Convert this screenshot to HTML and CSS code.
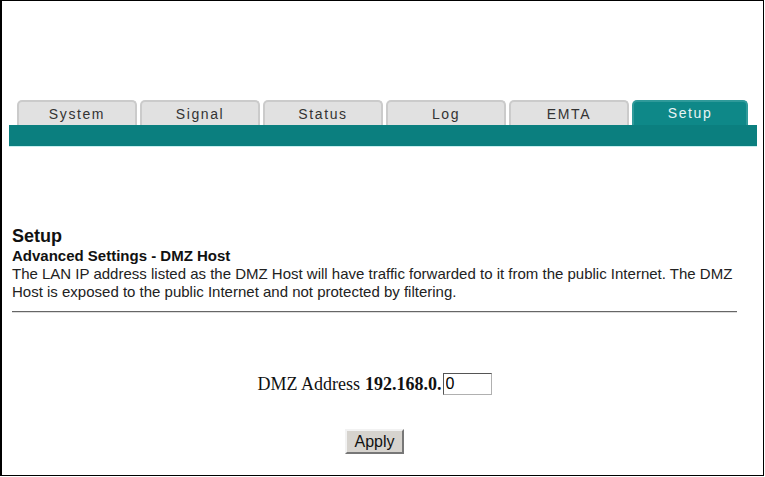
FILE: index.html
```html
<!DOCTYPE html>
<html>
<head>
<meta charset="utf-8">
<link rel="stylesheet" href="styles.css">
</head>
<body>
<div class="frame">
  <div class="nav">
    <div class="tabs">
      <div class="tab">System</div>
      <div class="tab">Signal</div>
      <div class="tab">Status</div>
      <div class="tab">Log</div>
      <div class="tab">EMTA</div>
      <div class="tab active">Setup</div>
    </div>
    <div class="bar"></div>
  </div>
  <div class="content">
    <div class="title">Setup</div>
    <div class="subtitle">Advanced Settings - DMZ Host</div>
    <p class="desc">The LAN IP address listed as the DMZ Host will have traffic forwarded to it from the public Internet. The DMZ Host is exposed to the public Internet and not protected by filtering.</p>
    <div class="rule"></div>
    <div class="form">
      <div class="addr"><span class="label">DMZ Address</span><b class="ip">192.168.0.</b><input class="field" type="text" value="0"></div>
      <button class="apply">Apply</button>
    </div>
  </div>
</div>
</body>
</html>
```
FILE: styles.css
```css
html, body {
  margin: 0;
  padding: 0;
  background: #fff;
}
.frame {
  box-sizing: border-box;
  width: 764px;
  height: 476px;
  border-top: 1px solid #000;
  border-left: 2px solid #000;
  border-right: 1px solid #000;
  border-bottom: 1px solid #000;
  padding-top: 99px;
  font-family: "Liberation Sans", Arial, sans-serif;
}
.nav {
  margin-left: 7px;
  width: 748px;
}
.tabs {
  display: flex;
  gap: 3px;
  padding-left: 8px;
  height: 25px;
}
.tab {
  box-sizing: border-box;
  width: 120px;
  height: 25px;
  background: #e1e1e1;
  border: 2px solid #cbcbcb;
  border-bottom: none;
  border-radius: 5px 5px 0 0;
  color: #333;
  font-size: 14px;
  letter-spacing: 1.6px;
  text-align: center;
  line-height: 24px;
}
.tab.active {
  width: 116px;
  background: #0e8888;
  border-color: #2f9a9a;
  color: #e8f4f4;
  line-height: 22px;
}
.bar {
  height: 21px;
  background: #0b7f7f;
  border-bottom: 1px solid #c8f0f0;
}
.content {
  padding: 78px 26px 0 10px;
}
.title {
  font-size: 18px;
  font-weight: bold;
  line-height: 22px;
  color: #111;
}
.subtitle {
  font-size: 15px;
  font-weight: bold;
  line-height: 18px;
  color: #111;
}
.desc {
  margin: 0;
  font-size: 15px;
  line-height: 18px;
  color: #222;
}
.rule {
  margin-top: 10px;
  height: 1px;
  background: #666;
  border-bottom: 1px solid #ddd;
}
.form {
  display: flex;
  flex-direction: column;
  align-items: center;
  padding-top: 60px;
}
.addr {
  font-family: "Liberation Serif", "Times New Roman", serif;
  font-size: 18px;
  color: #111;
  display: flex;
  align-items: center;
  height: 22px;
}
.label {
  margin-right: 5px;
}
.ip {
  font-weight: bold;
  margin-right: 1px;
}
.field {
  box-sizing: border-box;
  width: 49px;
  height: 22px;
  margin: 0;
  padding: 0 2px;
  border: 1px solid #b0b0b0;
  border-top-color: #555;
  border-left-color: #555;
  font-family: "Liberation Sans", Arial, sans-serif;
  font-size: 16px;
}
.apply {
  margin-top: 34px;
  box-sizing: border-box;
  width: 59px;
  height: 25px;
  background: #d6d3ce;
  border: 2px solid #f2f2f2;
  border-right-color: #777;
  border-bottom-color: #777;
  font-family: "Liberation Sans", Arial, sans-serif;
  font-size: 16px;
  color: #111;
  padding: 0;
}
```
